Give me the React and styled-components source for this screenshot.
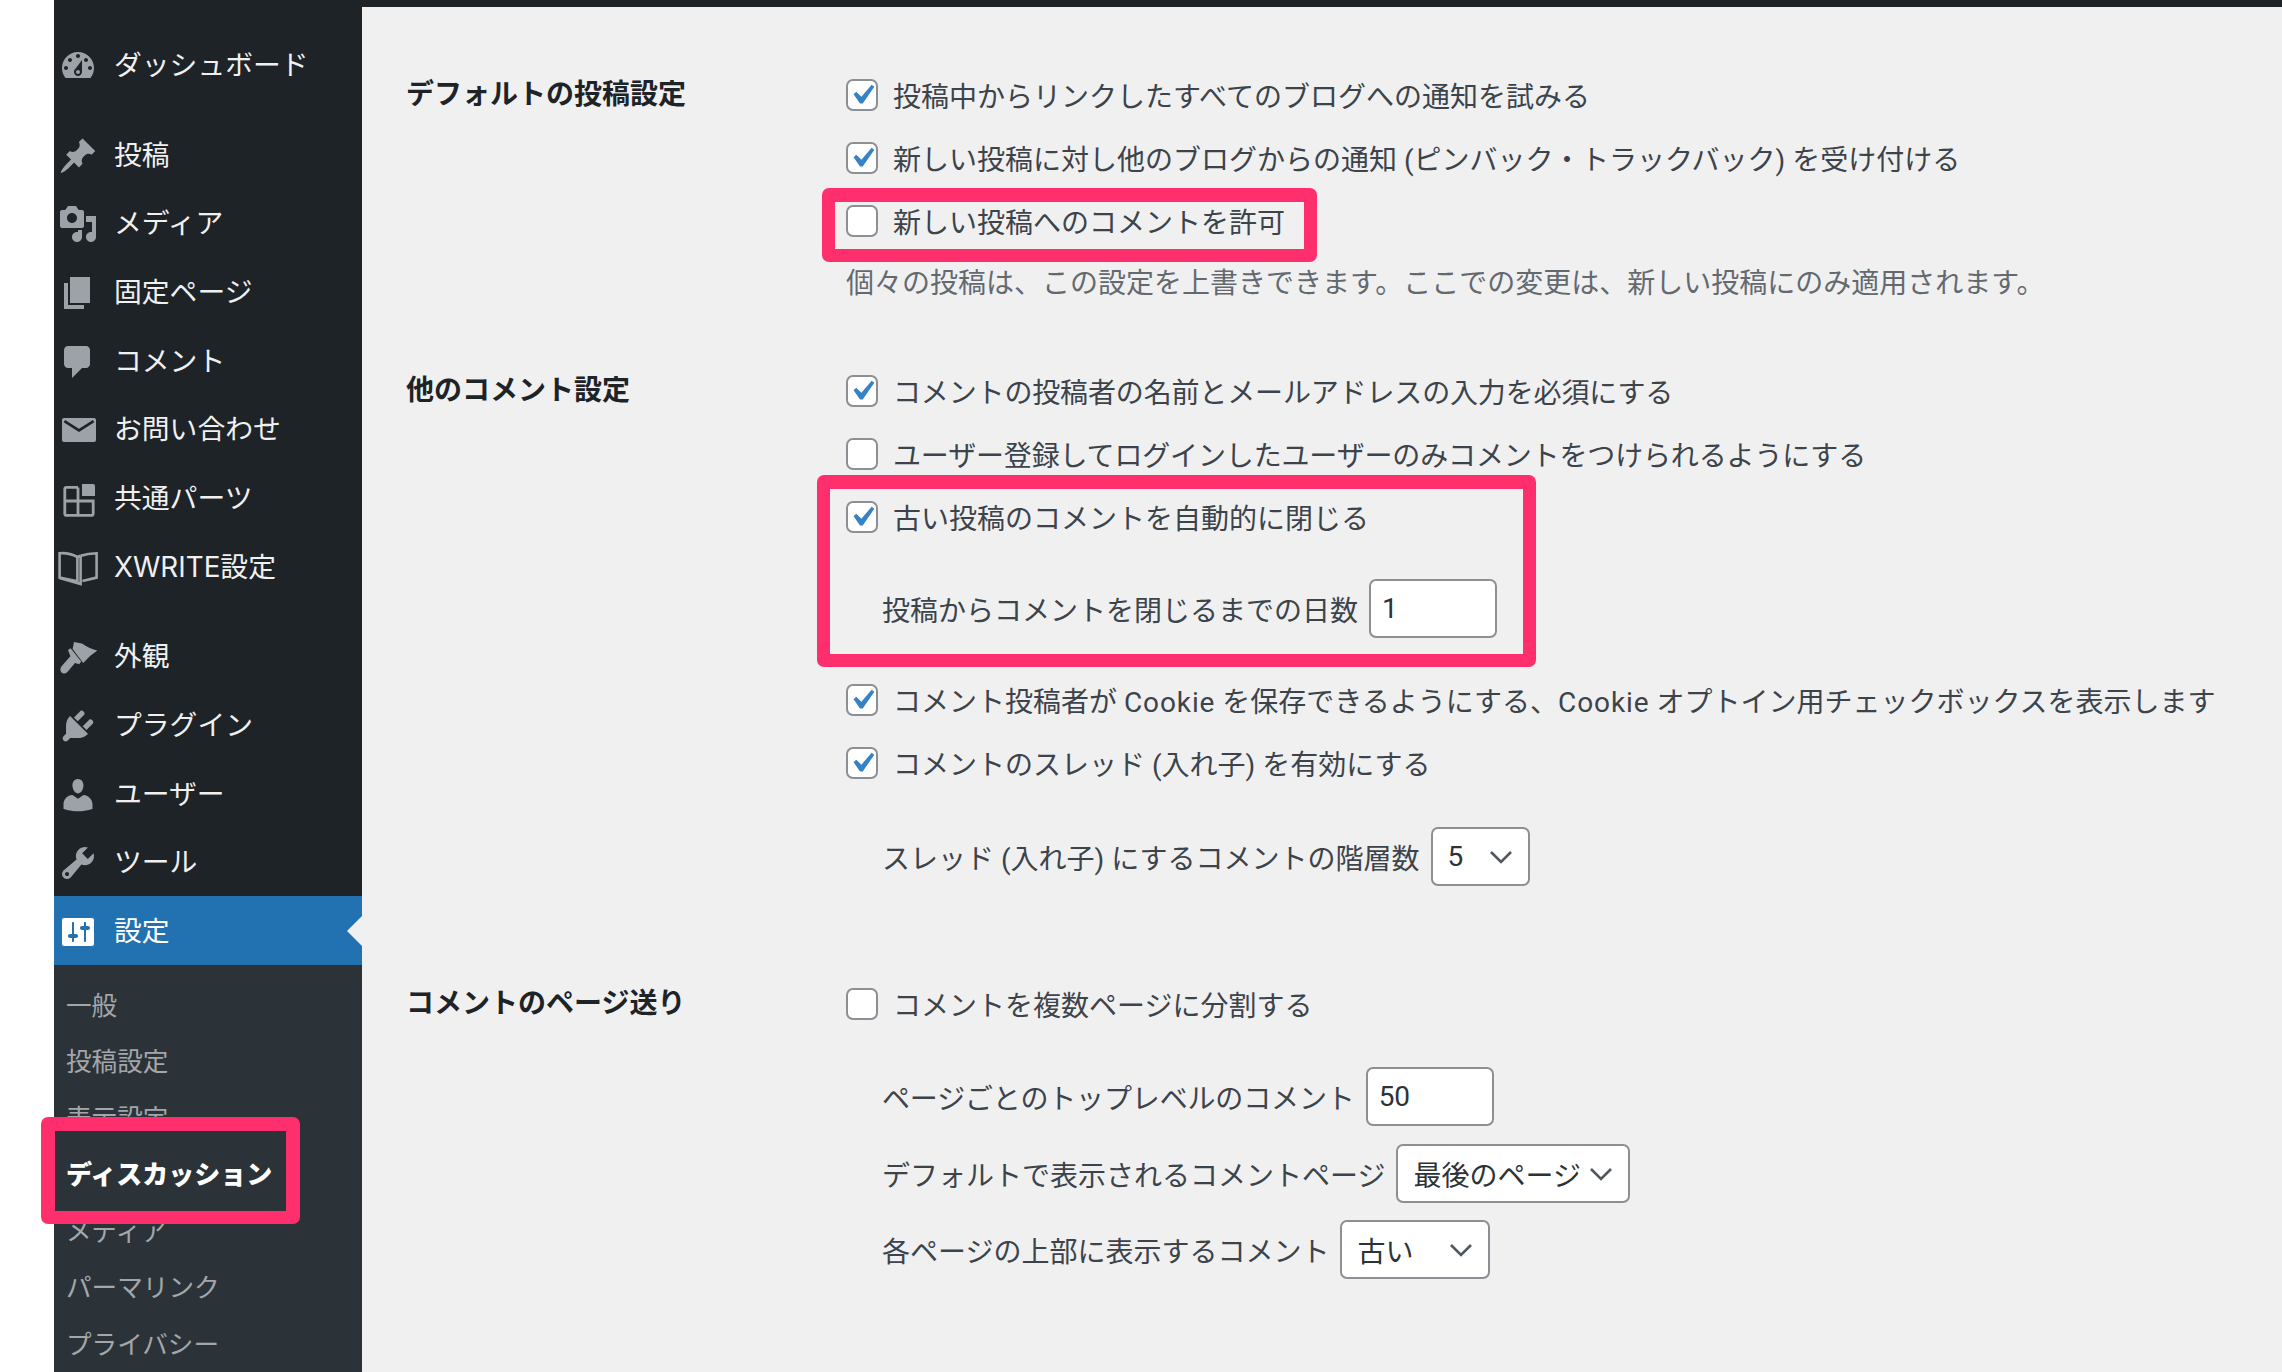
import React from "react";
import styled, { createGlobalStyle } from "styled-components";

const FONT = `Roboto, "Noto Sans CJK JP", "Noto Sans", sans-serif`;
const MENU_FONT = `Inter, "Noto Sans CJK JP", "Noto Sans", sans-serif`;
const PINK = "#ff2f6e";

const Global = createGlobalStyle`
  html, body { margin: 0; padding: 0; background: #fff; }
  body { font-family: ${FONT}; overflow: hidden; }
  *, *::before, *::after { box-sizing: border-box; }
`;

const Page = styled.div`
  display: flex;
  height: 1372px;
  padding-left: 54px;
  overflow: hidden;
`;

const Sidebar = styled.nav`
  flex: 0 0 308px;
  background: #1d2327;
  padding-top: 30px;
  display: flex;
  flex-direction: column;
  font-family: ${MENU_FONT};
`;

const MenuItem = styled.div`
  position: relative;
  flex: 0 0 68.7px;
  display: flex;
  align-items: center;
  gap: 16px;
  padding-left: 4px;
  margin-top: ${(p) => (p.$sep ? "21px" : "0")};
  font-size: 27.8px;
  color: ${(p) => (p.$active ? "#fff" : "#f0f0f1")};
  background: ${(p) => (p.$active ? "#2271b1" : "transparent")};
  svg { color: ${(p) => (p.$active ? "#fff" : "#9ca2a7")}; }
  ${(p) =>
    p.$active &&
    `&::after {
      content: "";
      position: absolute;
      right: 0;
      top: 50%;
      transform: translateY(-50%);
      border: 15px solid transparent;
      border-right-color: #f0f0f1;
    }`}
`;

const MenuText = styled.span`
  padding-bottom: 3px;
`;

const Icon = styled.svg`
  flex: 0 0 40px;
  width: 40px;
  height: 40px;
  fill: currentColor;
  margin-top: 3px;
`;

const Submenu = styled.div`
  background: #2c3338;
  flex: 1;
  padding-top: 11px;
`;

const SubItem = styled.div`
  position: relative;
  height: 56.5px;
  display: flex;
  align-items: center;
  padding: 0 0 2px 12px;
  font-size: ${(p) => (p.$current ? "26px" : "25.6px")};
  color: ${(p) => (p.$current ? "#fff" : "#a3a7ab")};
  font-weight: ${(p) => (p.$current ? 900 : 400)};
  ${(p) =>
    p.$current &&
    `z-index: 1;
    &::before {
      content: "";
      position: absolute;
      z-index: -1;
      left: -13px;
      top: -28px;
      width: 259px;
      height: 107px;
      background: #2c3338;
      border: solid ${PINK};
      border-width: 14px 14px 13px 14px;
      border-radius: 7px;
    }`}
`;

const Column = styled.div`
  flex: 1;
  display: flex;
  flex-direction: column;
  background: #f0f0f1;
  min-width: 0;
`;

const TopBar = styled.div`
  flex: 0 0 7px;
  background: #1d2327;
`;

const Content = styled.main`
  padding: 56px 0 0 44px;
`;

const Section = styled.section`
  display: grid;
  grid-template-columns: 440px 1fr;
  margin-top: ${(p) => p.$top || 0}px;
`;

const Heading = styled.h2`
  margin: 0;
  font-size: 28px;
  font-weight: 700;
  color: #1d2327;
  line-height: 63px;
`;

const Fields = styled.div`
  display: flex;
  flex-direction: column;
`;

const CheckRow = styled.div`
  height: 63px;
  display: flex;
  align-items: center;
  gap: 15px;
  font-size: 28px;
  color: #3c434a;
  white-space: nowrap;
`;

const Label = styled.span`
  letter-spacing: ${(p) => (p.$tight ? "-0.15px" : "0")};
`;

const Latin = styled.span`
  letter-spacing: 0.9px;
`;

const Box = styled.span`
  flex: 0 0 32px;
  width: 32px;
  height: 32px;
  border: 2px solid #8c8f94;
  border-radius: 7px;
  background: #fff;
  display: flex;
  align-items: center;
  justify-content: center;
  svg {
    flex: none;
    width: 40px;
    height: 40px;
    fill: #3582c4;
  }
`;

const Description = styled.p`
  margin: 0;
  height: 60px;
  line-height: 63px;
  font-size: 28px;
  color: #646970;
  white-space: nowrap;
`;

const SubRow = styled.div`
  display: flex;
  align-items: center;
  gap: 11px;
  padding-left: 36px;
  margin-top: ${(p) => p.$top}px;
  font-size: 28px;
  color: #3c434a;
  white-space: nowrap;
`;

const Control = styled.div`
  flex: none;
  width: ${(p) => p.$width}px;
  height: 59px;
  background: #fff;
  border: 2px solid #8c8f94;
  border-radius: 7px;
  display: flex;
  align-items: center;
  justify-content: space-between;
  padding: 0 ${(p) => (p.$select ? "15px" : "11px")};
  font-size: 28px;
  color: #2c3338;
`;

const Chevron = styled.svg`
  flex: none;
  width: 24px;
  height: 14px;
  fill: none;
  stroke: #50575e;
  stroke-width: 2.6;
`;

const Annotated = styled.div`
  position: relative;
  margin-top: ${(p) => p.$top || 0}px;
`;

const Frame = styled.div`
  position: absolute;
  left: ${(p) => p.$left}px;
  top: ${(p) => p.$y}px;
  width: ${(p) => p.$width}px;
  height: ${(p) => p.$height}px;
  border: solid ${PINK};
  border-width: 14px 13px 13px 13px;
  border-radius: 7px;
  pointer-events: none;
`;

const ICONS = {
  dashboard: (
    <path fillRule="evenodd" d="M3.76 16h12.48c1.1-1.37 1.76-3.11 1.76-5 0-4.42-3.58-8-8-8s-8 3.58-8 8c0 1.89.66 3.63 1.76 5zM10 4c.55 0 1 .45 1 1s-.45 1-1 1-1-.45-1-1 .45-1 1-1zM6 6c.55 0 1 .45 1 1s-.45 1-1 1-1-.45-1-1 .45-1 1-1zm8 0c.55 0 1 .45 1 1s-.45 1-1 1-1-.45-1-1 .45-1 1-1zm-5.37 5.55L12 7v6c0 1.1-.9 2-2 2s-2-.9-2-2c0-.57.24-1.08.63-1.45zM4 10c.55 0 1 .45 1 1s-.45 1-1 1-1-.45-1-1 .45-1 1-1zm12 0c.55 0 1 .45 1 1s-.45 1-1 1-1-.45-1-1 .45-1 1-1zm-5 3c0-.55-.45-1-1-1s-1 .45-1 1 .45 1 1 1 1-.45 1-1z" />
  ),
  post: (
    <path d="M10.44 3.02l1.82-1.82 6.36 6.35-1.83 1.82c-1.05-.68-2.48-.57-3.41.36l-.75.75c-.92.93-1.04 2.35-.35 3.41l-1.83 1.82-2.41-2.41-2.8 2.79c-.42.42-3.38 2.71-3.8 2.29s1.86-3.39 2.28-3.81l2.79-2.79L4.1 9.36l1.83-1.82c1.05.69 2.48.57 3.4-.36l.75-.75c.93-.92 1.05-2.35.36-3.41z" />
  ),
  media: (
    <path fillRule="evenodd" d="M13 11V4c0-.55-.45-1-1-1h-1.67L9 1H5L3.67 3H2c-.55 0-1 .45-1 1v7c0 .55.45 1 1 1h10c.55 0 1-.45 1-1zM7 4.5c1.38 0 2.5 1.12 2.5 2.5S8.38 9.5 7 9.5 4.5 8.38 4.5 7 5.62 4.5 7 4.5zM14 6h5v10.5c0 1.38-1.12 2.5-2.5 2.5S14 17.88 14 16.5s1.12-2.5 2.5-2.5c.17 0 .34.02.5.05V9h-3V6zm-4 8.05V13h2v3.5c0 1.38-1.12 2.5-2.5 2.5S7 17.88 7 16.5 8.12 14 9.5 14c.17 0 .34.02.5.05z" />
  ),
  page: <path d="M6 15V2h10v13H6zm-1 1h8v2H3V5h2v11z" />,
  comment: <path d="M5 2h9c1.1 0 2 .9 2 2v7c0 1.1-.9 2-2 2h-2l-5 5v-5H5c-1.1 0-2-.9-2-2V4c0-1.1.9-2 2-2z" />,
  mail: (
    <>
      <rect x="2" y="4" width="17" height="12" rx="1" />
      <path d="M3.2 5.6l7.3 4.6 7.3-4.6" fill="none" stroke="#1d2327" strokeWidth="1.3" />
    </>
  ),
  blocks: (
    <>
      <path d="M10 4.2H4.2a.8.8 0 0 0-.8.8v12.4a.8.8 0 0 0 .8.8h12.6a.8.8 0 0 0 .8-.8V11H3.4M10 4.2v14" fill="none" stroke="currentColor" strokeWidth="1.4" />
      <path d="M12 2.5h5.5a1 1 0 0 1 1 1v5H12z" />
    </>
  ),
  book: (
    <g fill="none" stroke="currentColor" strokeWidth="1.3">
      <path d="M.8 2.6Q5.5 2.2 9.7 4.5V16.6L.8 14.8Z" />
      <path d="M11.3 3.9Q15 2.6 19.3 2.6V14.8L12.2 16.5" />
      <path d="M11.3 3.9L9.7 4.5M11.3 3.9V18L.8 15" />
    </g>
  ),
  appearance: (
    <>
      <path d="M8 2.5L12 3.2Q16 6 19.7 6.7Q16 9 12.6 13L7.3 6Z" />
      <path d="M5 6.5L6.3 5.6L11.6 12.2L10.6 13.6L8.5 13L4.6 17.6Q3 19 1.6 17.6Q.6 16 2 14.4L6.2 9.6Z" />
    </>
  ),
  plugin: (
    <path d="M13.11 4.36L9.87 7.6 8 5.73l3.24-3.24c.35-.34 1.05-.2 1.56.32.52.51.66 1.21.31 1.55zm-8 1.77l.91-1.12 9.01 9.01-1.19.84c-.71.71-2.63 1.16-3.82 1.16H6.14L4.9 17.26c-.59.59-1.54.59-2.12 0-.59-.58-.59-1.53 0-2.12l1.24-1.24v-3.88c0-1.13.4-3.19 1.09-3.89zm7.26 3.97l3.24-3.24c.34-.35 1.04-.21 1.55.31.52.51.66 1.21.31 1.55l-3.24 3.25z" />
  ),
  users: (
    <path d="M10 9.25c-2.27 0-2.73-3.44-2.73-3.44C7 4.02 7.82 2 9.97 2c2.16 0 2.98 2.02 2.71 3.81 0 0-.41 3.44-2.68 3.44zm0 2.57L12.72 10c2.39 0 4.52 2.33 4.52 4.53v2.49s-3.65 1.13-7.24 1.13c-3.65 0-7.24-1.13-7.24-1.13v-2.49c0-2.25 1.94-4.48 4.47-4.48z" />
  ),
  tools: (
    <path fillRule="evenodd" d="M16.68 9.77c-1.34 1.34-3.3 1.67-4.95.99l-5.41 6.52c-.99.99-2.59.99-3.58 0s-.99-2.59 0-3.57l6.52-5.42c-.68-1.65-.35-3.61.99-4.95 1.28-1.28 3.12-1.62 4.72-1.06l-2.89 2.89 2.82 2.82 2.86-2.87c.53 1.58.18 3.39-1.08 4.65zM3.81 16.21c.4.39 1.04.39 1.43 0 .4-.4.4-1.04 0-1.43-.39-.4-1.03-.4-1.43 0-.39.39-.39 1.03 0 1.43z" />
  ),
  settings: (
    <path fillRule="evenodd" d="M18 16V4c0-.55-.45-1-1-1H3c-.55 0-1 .45-1 1v12c0 .55.45 1 1 1h14c.55 0 1-.45 1-1zM8 11h1c.55 0 1 .45 1 1s-.45 1-1 1H8v1.5c0 .28-.22.5-.5.5s-.5-.22-.5-.5V13H6c-.55 0-1-.45-1-1s.45-1 1-1h1V5.5c0-.28.22-.5.5-.5s.5.22.5.5V11zm5-2h-1c-.55 0-1-.45-1-1s.45-1 1-1h1V5.5c0-.28.22-.5.5-.5s.5.22.5.5V7h1c.55 0 1 .45 1 1s-.45 1-1 1h-1v5.5c0 .28-.22.5-.5.5s-.5-.22-.5-.5V9z" />
  ),
};

const Menu = ({ icon, sep, active, children }) => (
  <MenuItem $sep={sep} $active={active}>
    <Icon viewBox="0 0 20 20">{ICONS[icon]}</Icon>
    <MenuText>{children}</MenuText>
  </MenuItem>
);

const Check = ({ checked, tight, children }) => (
  <CheckRow>
    <Box>
      {checked && (
        <svg viewBox="0 0 20 20">
          <path d="M14.83 4.89l1.34.94-5.81 8.38H9.02L5.78 9.67l1.34-1.25 2.57 2.4z" />
        </svg>
      )}
    </Box>
    <Label $tight={tight}>{children}</Label>
  </CheckRow>
);

const Select = ({ width, children }) => (
  <Control $select $width={width}>
    <span>{children}</span>
    <Chevron viewBox="0 0 24 14">
      <path d="M2 2l10 10L22 2" />
    </Chevron>
  </Control>
);

export default function App() {
  return (
    <>
      <Global />
      <Page>
        <Sidebar>
          <Menu icon="dashboard">ダッシュボード</Menu>
          <Menu icon="post" sep>投稿</Menu>
          <Menu icon="media">メディア</Menu>
          <Menu icon="page">固定ページ</Menu>
          <Menu icon="comment">コメント</Menu>
          <Menu icon="mail">お問い合わせ</Menu>
          <Menu icon="blocks">共通パーツ</Menu>
          <Menu icon="book">XWRITE設定</Menu>
          <Menu icon="appearance" sep>外観</Menu>
          <Menu icon="plugin">プラグイン</Menu>
          <Menu icon="users">ユーザー</Menu>
          <Menu icon="tools">ツール</Menu>
          <Menu icon="settings" active>設定</Menu>
          <Submenu>
            <SubItem>一般</SubItem>
            <SubItem>投稿設定</SubItem>
            <SubItem>表示設定</SubItem>
            <SubItem $current>ディスカッション</SubItem>
            <SubItem>メディア</SubItem>
            <SubItem>パーマリンク</SubItem>
            <SubItem>プライバシー</SubItem>
          </Submenu>
        </Sidebar>
        <Column>
          <TopBar />
          <Content>
            <Section>
              <Heading>デフォルトの投稿設定</Heading>
              <Fields>
                <Check checked>投稿中からリンクしたすべてのブログへの通知を試みる</Check>
                <Check checked>新しい投稿に対し他のブログからの通知 (ピンバック・トラックバック) を受け付ける</Check>
                <Annotated>
                  <Check>新しい投稿へのコメントを許可</Check>
                  <Frame $left={-24} $y={-1} $width={495} $height={74} />
                </Annotated>
                <Description>個々の投稿は、この設定を上書きできます。ここでの変更は、新しい投稿にのみ適用されます。</Description>
              </Fields>
            </Section>
            <Section $top={47}>
              <Heading>他のコメント設定</Heading>
              <Fields>
                <Check checked tight>コメントの投稿者の名前とメールアドレスの入力を必須にする</Check>
                <Check tight>ユーザー登録してログインしたユーザーのみコメントをつけられるようにする</Check>
                <Annotated>
                  <Check checked>古い投稿のコメントを自動的に閉じる</Check>
                  <SubRow $top={31}>
                    <Label>投稿からコメントを閉じるまでの日数</Label>
                    <Control $width={128}>1</Control>
                  </SubRow>
                  <Frame $left={-29} $y={-10} $width={719} $height={192} />
                </Annotated>
                <Annotated $top={30}>
                  <Check checked>
                    コメント投稿者が <Latin>Cookie</Latin> を保存できるようにする、<Latin>Cookie</Latin> オプトイン用チェックボックスを表示します
                  </Check>
                </Annotated>
                <Check checked>コメントのスレッド (入れ子) を有効にする</Check>
                <SubRow $top={33}>
                  <Label>スレッド (入れ子) にするコメントの階層数</Label>
                  <Select width={99}>5</Select>
                </SubRow>
              </Fields>
            </Section>
            <Section $top={86}>
              <Heading>コメントのページ送り</Heading>
              <Fields>
                <Check>コメントを複数ページに分割する</Check>
                <SubRow $top={32}>
                  <Label $tight>ページごとのトップレベルのコメント</Label>
                  <Control $width={128}>50</Control>
                </SubRow>
                <SubRow $top={18}>
                  <Label>デフォルトで表示されるコメントページ</Label>
                  <Select width={234}>最後のページ</Select>
                </SubRow>
                <SubRow $top={17}>
                  <Label>各ページの上部に表示するコメント</Label>
                  <Select width={150}>古い</Select>
                </SubRow>
              </Fields>
            </Section>
          </Content>
        </Column>
      </Page>
    </>
  );
}
